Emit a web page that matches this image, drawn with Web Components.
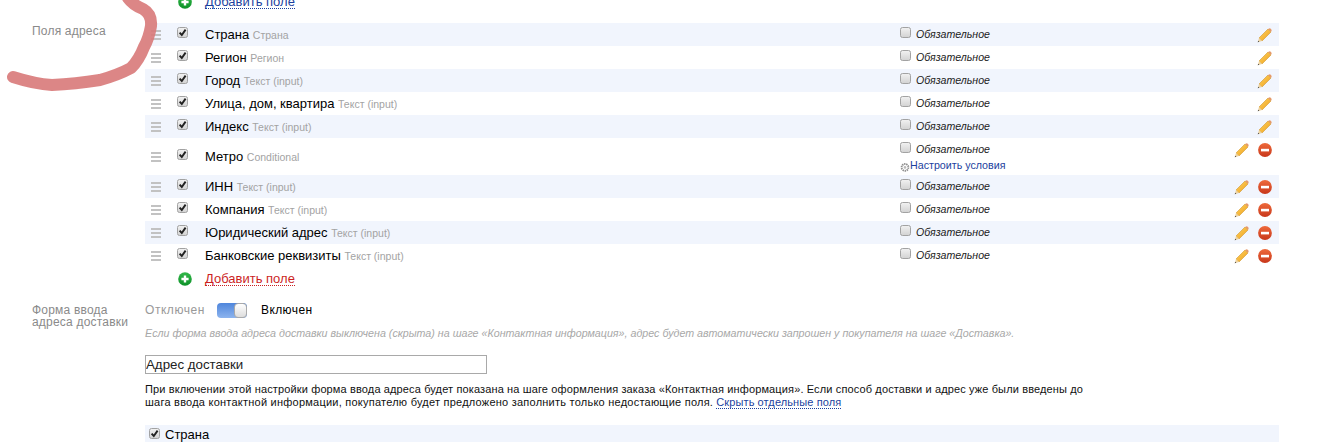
<!DOCTYPE html>
<html lang="ru">
<head>
<meta charset="utf-8">
<title>Поля адреса</title>
<style>
html, body { margin: 0; background: #fff; overflow: hidden; height: 442px; }
body { font-family: "Liberation Sans", Arial, sans-serif; position: relative; }
</style>
</head>
<body>
<checkout-settings>
  <settings-section label="">
    <add-field>Добавить поле</add-field>
  </settings-section>

  <settings-section label="Поля адреса" class="fields">
    <field-list>
      <field-row name="Страна" type="Страна"></field-row>
      <field-row name="Регион" type="Регион"></field-row>
      <field-row name="Город" type="Текст (input)"></field-row>
      <field-row name="Улица, дом, квартира" type="Текст (input)"></field-row>
      <field-row name="Индекс" type="Текст (input)"></field-row>
      <field-row name="Метро" type="Conditional" removable conditions></field-row>
      <field-row name="ИНН" type="Текст (input)" removable></field-row>
      <field-row name="Компания" type="Текст (input)" removable></field-row>
      <field-row name="Юридический адрес" type="Текст (input)" removable></field-row>
      <field-row name="Банковские реквизиты" type="Текст (input)" removable></field-row>
    </field-list>
    <add-field active>Добавить поле</add-field>
  </settings-section>

  <settings-section label="Форма ввода адреса доставки" class="form">
    <toggle-line></toggle-line>
    <delivery-form></delivery-form>
  </settings-section>
</checkout-settings>
<scribble-mark></scribble-mark>

<script>
// иконки общие для нескольких элементов
const PENCIL = `<svg width="15" height="15" viewBox="0 0 15 15">
  <defs><linearGradient id="p" x1="0" y1="0" x2="1" y2="1"><stop offset="0" stop-color="#ffd45e"/><stop offset="1" stop-color="#ee9f1e"/></linearGradient></defs>
  <path d="M11 1 L14 4 L5 13 L2 10 Z" fill="url(#p)" stroke="#c98a1c" stroke-width=".5"/>
  <path d="M11 1 L12.2 .4 Q13.2 .2 14 1 Q14.8 1.8 14.6 2.8 L14 4 Z" fill="#e59a6a"/>
  <path d="M2 10 L5 13 L.8 14.2 Z" fill="#eed3a0"/>
  <path d="M1.3 12.7 L2.3 13.7 L.7 14.3 Z" fill="#444"/>
</svg>`

const REMOVE = `<svg width="14" height="14" viewBox="0 0 14 14">
  <defs><linearGradient id="r" x1="0" y1="0" x2="0" y2="1"><stop offset="0" stop-color="#ee6a3c"/><stop offset="1" stop-color="#c8371a"/></linearGradient></defs>
  <circle cx="7" cy="7" r="6.9" fill="url(#r)"/>
  <rect x="3" y="5.8" width="8" height="2.6" fill="#fff"/>
</svg>`

class CheckBox extends HTMLElement {
    constructor(){
        super();
        this.attachShadow({mode: 'open'})
    }
    connectedCallback(){
        const tick = this.hasAttribute('checked')
            ? '<path d="M2.6 5.6 L4.8 8 L8.6 2.6" fill="none" stroke="#222" stroke-width="1.9"/>'
            : ''
        this.shadowRoot.innerHTML = `<style>
            :host{display:inline-block;width:11px;height:11px;line-height:0}
          </style>
          <svg width="11" height="11" viewBox="0 0 11 11">
            <defs><linearGradient id="c" x1="0" y1="0" x2="0" y2="1"><stop offset="0" stop-color="#f2f2f2"/><stop offset="1" stop-color="#d2d2d2"/></linearGradient></defs>
            <rect x=".5" y=".5" width="10" height="10" rx="2" fill="url(#c)" stroke="#a2a2a2"/>
            ${tick}
          </svg>`
    }
}
customElements.define('check-box', CheckBox)

class CheckoutSettings extends HTMLElement {
    constructor(){
        super();
        this.attachShadow({mode: 'open'})
        this.shadowRoot.innerHTML = `<style>
            :host{display:block;width:1279px;margin-top:-10px;color:#000}
          </style><slot></slot>`
    }
}
customElements.define('checkout-settings', CheckoutSettings)

class SettingsSection extends HTMLElement {
    constructor(){
        super();
        this.attachShadow({mode: 'open'})
    }
    connectedCallback(){
        this.shadowRoot.innerHTML = `<style>
            :host{display:grid;grid-template-columns:145px 1fr}
            :host(.fields){margin-top:10px}
            :host(.form){margin-top:12px}
            .label{padding:0 0 0 32px;font-size:12px;line-height:12px;color:#8a8a8a;letter-spacing:.2px}
            :host(.fields) .label{padding-top:2px}
            :host(.form) .label{padding-top:2px}
          </style>
          <div class="label">${this.getAttribute('label') ?? ''}</div>
          <div><slot></slot></div>`
    }
}
customElements.define('settings-section', SettingsSection)

class FieldList extends HTMLElement {
    constructor(){
        super();
        this.attachShadow({mode: 'open'})
        this.shadowRoot.innerHTML = `<style>:host{display:block}</style><slot></slot>`
    }
    connectedCallback(){
        // полосы через одну, первая голубая
        ;[...this.children].forEach((row, i) => {
            if (i % 2 === 0) row.setAttribute('striped', '')
        })
    }
}
customElements.define('field-list', FieldList)

class FieldRow extends HTMLElement {
    constructor(){
        super();
        this.attachShadow({mode: 'open'})
    }
    connectedCallback(){
        const removable = this.hasAttribute('removable')
        const conditions = this.hasAttribute('conditions')
            ? `<div class="cond"><svg width="10" height="10" viewBox="0 0 10 10"><circle cx="5" cy="5.4" r="3.4" fill="none" stroke="#8d8d8d" stroke-width="1.8" stroke-dasharray="1.4 .7"/><circle cx="5" cy="5.4" r="1.3" fill="#bbb"/></svg><a>Настроить условия</a></div>`
            : ''
        this.shadowRoot.innerHTML = `<style>
            :host{display:grid;grid-template-columns:32px 28px 695px 1fr;height:23px;font-size:13px}
            :host([conditions]){height:37px}
            :host([striped]){background:#f1f5fd}
            .grip,.check,.name{height:23px;align-self:center;box-sizing:border-box}
            .grip{padding:7px 0 0 6px}
            .grip i{display:block;width:10px;height:2px;background:#c2c2c2;margin-bottom:2px}
            .check{padding-top:3px}
            .name{line-height:23px;white-space:nowrap;overflow:hidden}
            .type{font-size:10.5px;color:#a3a3a3}
            .req{padding-top:4px}
            .line{display:flex;gap:5px;height:13px}
            .line span{font-size:10.6px;font-style:italic;line-height:15px;color:#222}
            .cond{display:flex;font-size:10.7px;line-height:14px;margin-top:3px}
            .cond svg{margin-top:4px;flex:none}
            a{color:#1c3f9e}
            .acts{display:flex;justify-content:flex-end;gap:9px;padding:5px 7px 0 0;height:15px}
          </style>
          <div class="grip"><i></i><i></i><i></i></div>
          <div class="check"><check-box checked></check-box></div>
          <div class="name">${this.getAttribute('name')} <span class="type">${this.getAttribute('type')}</span></div>
          <div style="display:grid;grid-template-columns:1fr auto">
            <div class="req">
              <div class="line"><check-box></check-box><span>Обязательное</span></div>
              ${conditions}
            </div>
            <div class="acts">${PENCIL}${removable ? REMOVE : ''}</div>
          </div>`
    }
}
customElements.define('field-row', FieldRow)

class AddField extends HTMLElement {
    constructor(){
        super();
        this.attachShadow({mode: 'open'})
    }
    connectedCallback(){
        const color = this.hasAttribute('active') ? '#cc1f1f' : '#1c3f9e'
        this.shadowRoot.innerHTML = `<style>
            :host{display:flex;align-items:center;height:23px;padding-left:33px;font-size:13px}
            svg{margin-right:13px;flex:none}
            a{color:${color};border-bottom:1px dotted ${color};line-height:13px}
          </style>
          <svg width="14" height="14" viewBox="0 0 14 14">
            <defs><linearGradient id="g" x1="0" y1="0" x2="0" y2="1"><stop offset="0" stop-color="#34b84a"/><stop offset="1" stop-color="#0c9128"/></linearGradient></defs>
            <circle cx="7" cy="7" r="6.8" fill="url(#g)"/>
            <path d="M7 3.4 V10.6 M3.4 7 H10.6" stroke="#fff" stroke-width="2.4"/>
          </svg>
          <a><slot></slot></a>`
    }
}
customElements.define('add-field', AddField)

class ToggleLine extends HTMLElement {
    constructor(){
        super();
        this.attachShadow({mode: 'open'})
        this.shadowRoot.innerHTML = `<style>
            :host{display:flex;align-items:center;height:16px;font-size:12px;letter-spacing:.4px}
            .off{color:#999;width:72px;letter-spacing:.55px}
            .sw{width:30px;height:15px;border-radius:4px;background:linear-gradient(#4f86dc,#8db4ee);position:relative;margin-right:14px;box-sizing:border-box}
            .knob{position:absolute;right:0;top:0;width:11px;height:13px;border:1px solid #aaa;border-radius:4px;background:linear-gradient(#fff,#ddd)}
          </style>
          <span class="off">Отключен</span>
          <div class="sw"><div class="knob"></div></div>
          <span>Включен</span>`
    }
}
customElements.define('toggle-line', ToggleLine)

class DeliveryForm extends HTMLElement {
    constructor(){
        super();
        this.attachShadow({mode: 'open'})
        this.shadowRoot.innerHTML = `<style>
            :host{display:block}
            .hint{font-size:10.7px;font-style:italic;color:#a8a8a8;margin-top:9px;line-height:13px}
            input{display:block;box-sizing:border-box;width:342px;height:19px;margin:15px 0 0;padding:0;border:1px solid #a9a9a9;font:13.3px "Liberation Sans",Arial,sans-serif;color:#222;outline:none}
            p{font-size:11px;letter-spacing:.13px;line-height:13px;margin:9px 0 0;width:950px;color:#111}
            p span{letter-spacing:.235px}
            a{color:#1c3f9e;border-bottom:1px dotted #1c3f9e;letter-spacing:.1px}
            .row{display:flex;align-items:flex-start;gap:5px;height:17px;margin-top:16px;background:#f1f5fd;padding-left:4px;font-size:13px;line-height:20px}
            check-box{margin-top:3px}
          </style>
          <div class="hint">Если форма ввода адреса доставки выключена (скрыта) на шаге «Контактная информация», адрес будет автоматически запрошен у покупателя на шаге «Доставка».</div>
          <input value="Адрес доставки">
          <p>При включении этой настройки форма ввода адреса будет показана на шаге оформления заказа «Контактная информация». Если способ доставки и адрес уже были введены до <span>шага ввода контактной информации, покупателю будет предложено заполнить только недостающие поля.</span> <a>Скрыть отдельные поля</a></p>
          <div class="row"><check-box checked></check-box><span>Страна</span></div>`
    }
}
customElements.define('delivery-form', DeliveryForm)

// красная пометка от руки поверх страницы
class ScribbleMark extends HTMLElement {
    constructor(){
        super();
        this.attachShadow({mode: 'open'})
        this.shadowRoot.innerHTML = `<style>
            :host{position:absolute;left:0;top:0;width:170px;height:100px;pointer-events:none}
          </style>
          <svg width="170" height="100" viewBox="0 0 170 100">
            <path d="M128 -2 Q133 5 143 9 Q152 14 151 26 Q149 38 144 47 Q139 60 131 68 Q118 75 100 80 Q75 84 52 85 Q35 84 13 77"
              fill="none" stroke="#d97c7c" stroke-opacity=".92" stroke-width="12" stroke-linecap="round" stroke-linejoin="round"/>
          </svg>`
    }
}
customElements.define('scribble-mark', ScribbleMark)
</script>
</body>
</html>
